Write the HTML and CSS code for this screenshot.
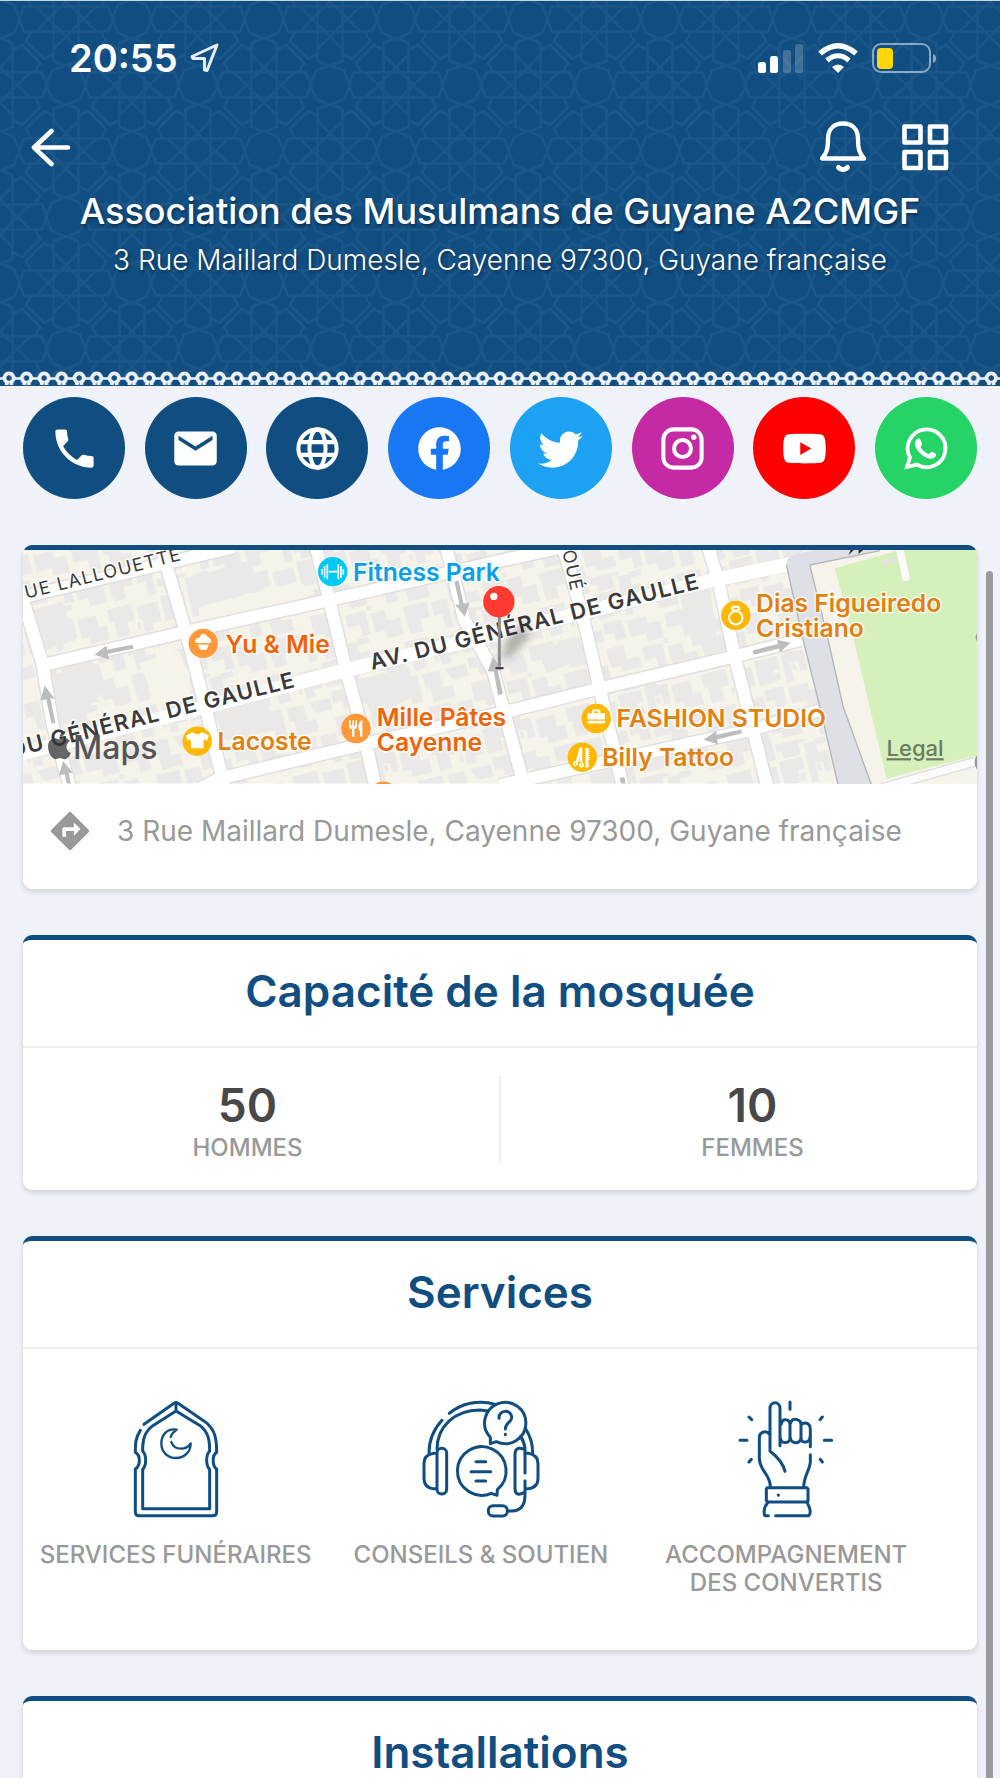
FILE: index.html
```html
<!DOCTYPE html>
<html lang="fr">
<head>
<meta charset="utf-8">
<meta name="viewport" content="width=device-width, initial-scale=1">
<title>Association des Musulmans de Guyane A2CMGF</title>
<link rel="stylesheet" href="styles.css">
</head>
<body>
<div class="app">
  <header class="header">
    <svg class="header-pattern" width="100%" height="100%" aria-hidden="true">
      <defs>
        <g id="ray">
          <path d="M-42 -12.500H42L47 0L42 12.500"/>
          <path transform="rotate(45)" d="M-30 -12.500H30"/>
          <path d="M35 12.500L40 22L22 40L12.500 35"/>
        </g>
        <g id="rosette">
          <use href="#ray"/><use href="#ray" transform="rotate(90)"/><use href="#ray" transform="rotate(180)"/><use href="#ray" transform="rotate(270)"/>
        </g>
        <path id="oct" d="M20 0L14 14L0 20L-14 14L-20 0L-14 -14L0 -20L14 -14Z"/>
        <pattern id="girih" width="132" height="132" y="18" patternUnits="userSpaceOnUse">
          <g fill="none" stroke="#1b5689" stroke-width="2.600">
            <use href="#oct"/><use href="#oct" x="132"/><use href="#oct" y="132"/><use href="#oct" x="132" y="132"/><use href="#oct" x="66" y="66"/>
            <use href="#rosette" x="66"/><use href="#rosette" x="66" y="132"/><use href="#rosette" y="66"/><use href="#rosette" x="132" y="66"/>
          </g>
        </pattern>
      </defs>
      <rect width="100%" height="100%" fill="url(#girih)"/>
    </svg>
    <div class="status">
      <div class="clock">20:55
        <svg width="30" height="30" viewBox="0 0 30 30" aria-hidden="true"><path d="M27 2L2 13.500L3 15.500H14.500V27L17 27.500Z" fill="none" stroke="#e6edf3" stroke-width="3" stroke-linejoin="round"/></svg>
      </div>
      <svg width="180" height="32" viewBox="0 0 180 32" aria-hidden="true">
        <g fill="#fff"><rect x="1" y="20" width="8" height="11" rx="2.500"/><rect x="13" y="14" width="8" height="17" rx="2.500"/>
        <g opacity=".2"><rect x="26" y="8" width="8" height="23" rx="2.500"/><rect x="38" y="2" width="8" height="29" rx="2.500"/></g></g>
        <g fill="none" stroke="#fff"><path d="M63 11.500Q81 -4 99 11.500" stroke-width="5.500"/><path d="M70 18.500Q81 9 92 18.500" stroke-width="5"/></g>
        <path d="M75 25Q81 20 87 25L81 31Z" fill="#fff"/>
        <rect x="116" y="2" width="57" height="28" rx="8" fill="none" stroke="#fff" stroke-opacity=".5" stroke-width="2"/>
        <path d="M176 12Q179 13 179 16.500T176 21Z" fill="#fff" opacity=".5"/>
        <rect x="120" y="6" width="16" height="21" rx="4" fill="#ffd60a"/>
      </svg>
    </div>
    <nav class="nav">
      <button class="icon-button" aria-label="Retour"><svg width="40" height="40" viewBox="0 0 40 40"><path d="M20.500 4L3 20.500L20.500 37M3 20.500H37" fill="none" stroke="#fff" stroke-width="4.500" stroke-linecap="round" stroke-linejoin="round"/></svg></button>
      <span class="nav-actions">
        <button class="icon-button" aria-label="Notifications"><svg width="48" height="52" viewBox="0 0 48 52"><path d="M3 37.500C8 32 9 27 9 18C9 8 15 2.500 24 2.500S39 8 39 18C39 27 40 32 45 37.500Z" fill="none" stroke="#fff" stroke-width="4.300" stroke-linejoin="round"/><path d="M19.500 46.500Q24 51 28.500 46.500" fill="none" stroke="#fff" stroke-width="5" stroke-linecap="round"/></svg></button>
        <button class="icon-button" aria-label="Menu"><svg width="48" height="48" viewBox="0 0 48 48"><g fill="none" stroke="#fff" stroke-width="4.600" stroke-linejoin="round"><path d="M3.500 3.500h16v16h-16zM29 3.500h16v16H29zM3.500 29h16v16h-16zM29 29h16v16H29z"/></g></svg></button>
      </span>
    </nav>
    <h1 class="title">Association des Musulmans de Guyane A2CMGF</h1>
    <p class="subtitle">3 Rue Maillard Dumesle, Cayenne 97300, Guyane française</p>
    <svg class="lace" width="100%" height="16" aria-hidden="true">
      <defs><pattern id="beads" width="17.540" height="16" patternUnits="userSpaceOnUse"><path d="M0 8.500H4M14 8.500H18" stroke="#eff3f9" stroke-width="2.600"/><path d="M6.500 15L7 12.200A4.600 4.600 0 1 1 11 12.200L11.500 15" fill="none" stroke="#eff3f9" stroke-width="3.800"/></pattern></defs>
      <rect width="100%" height="16" fill="url(#beads)"/>
    </svg>
  </header>

  <main class="content">
    <nav class="contacts" aria-label="Contact">
      <a class="contact" href="#tel" aria-label="Téléphone"><svg viewBox="0 0 24 24"><path d="M6.620 10.790c1.440 2.830 3.760 5.140 6.590 6.590l2.200-2.200c.27-.27.67-.36 1.020-.24 1.120.37 2.330.57 3.570.57.55 0 1 .45 1 1V20c0 .55-.45 1-1 1-9.390 0-17-7.610-17-17 0-.55.45-1 1-1h3.500c.55 0 1 .45 1 1 0 1.250.2 2.450.57 3.570.11.35.03.74-.25 1.020z"/></svg></a>
      <a class="contact" href="#mail" aria-label="E-mail"><svg viewBox="0 0 24 24"><path d="M20 4H4c-1.100 0-2 .9-2 2v12c0 1.100.9 2 2 2h16c1.100 0 2-.9 2-2V6c0-1.100-.9-2-2-2zm0 4l-8 5-8-5V6l8 5 8-5z"/></svg></a>
      <a class="contact" href="#web" aria-label="Site web"><svg viewBox="0 0 24 24"><g fill="none" stroke="#fff" stroke-width="1.900"><circle cx="12" cy="12" r="9"/><ellipse cx="12" cy="12" rx="3.800" ry="9"/><path d="M3.500 9h17M3.500 15h17"/></g></svg></a>
      <a class="contact facebook" href="#facebook" aria-label="Facebook"><svg viewBox="0 0 24 24"><path d="M12 2.040C6.500 2.040 2 6.530 2 12.060C2 17.060 5.660 21.210 10.440 21.960V14.960H7.900V12.060H10.440V9.850C10.440 7.340 11.930 5.960 14.220 5.960C15.310 5.960 16.450 6.150 16.450 6.150V8.620H15.190C13.950 8.620 13.560 9.390 13.560 10.180V12.060H16.340L15.890 14.960H13.560V21.960A10 10 0 0 0 22 12.060C22 6.530 17.500 2.040 12 2.040Z"/></svg></a>
      <a class="contact twitter" href="#twitter" aria-label="Twitter"><svg viewBox="0 0 24 24"><path d="M22.460 6C21.690 6.350 20.860 6.580 20 6.690C20.880 6.160 21.560 5.320 21.880 4.310C21.050 4.810 20.130 5.160 19.160 5.360C18.370 4.500 17.260 4 16 4C13.650 4 11.730 5.920 11.730 8.290C11.730 8.630 11.770 8.960 11.840 9.270C8.280 9.090 5.110 7.380 3 4.790C2.630 5.420 2.420 6.160 2.420 6.940C2.420 8.430 3.170 9.750 4.330 10.500C3.620 10.500 2.960 10.300 2.380 10V10.030C2.380 12.110 3.860 13.850 5.820 14.240C5.460 14.340 5.080 14.390 4.690 14.390C4.420 14.390 4.150 14.360 3.890 14.310C4.430 16 6 17.260 7.890 17.290C6.430 18.450 4.580 19.130 2.560 19.130C2.220 19.130 1.880 19.110 1.540 19.070C3.440 20.290 5.700 21 8.120 21C16 21 20.330 14.460 20.330 8.790C20.330 8.600 20.330 8.420 20.320 8.230C21.160 7.630 21.880 6.870 22.460 6Z"/></svg></a>
      <a class="contact instagram" href="#instagram" aria-label="Instagram"><svg viewBox="0 0 24 24"><g fill="none" stroke="#fff" stroke-width="1.900"><rect x="3" y="3" width="18" height="18" rx="4.800"/><circle cx="12" cy="12" r="4"/></g><circle cx="17.300" cy="6.700" r="1.300"/></svg></a>
      <a class="contact youtube" href="#youtube" aria-label="YouTube"><svg viewBox="0 0 24 24"><path d="M12 5C16 5 19 5.100 20 5.400C21.200 5.800 22 7 22 12S21.200 18.200 20 18.600C19 18.900 16 19 12 19S5 18.900 4 18.600C2.800 18.200 2 17 2 12S2.800 5.800 4 5.400C5 5.100 8 5 12 5ZM10 9V15L15.200 12Z"/></svg></a>
      <a class="contact whatsapp" href="#whatsapp" aria-label="WhatsApp"><svg viewBox="0 0 24 24"><path d="M3.300 20.700L4.700 16.200A8.900 8.900 0 1 1 8 19.600Z" fill="none" stroke="#fff" stroke-width="1.800"/><path d="M8.300 7.400C7.500 7.800 7 8.600 7 9.600C7.100 12.800 11.300 16.600 14.500 16.800C15.800 16.800 17 15.900 17 14.600C16.600 14.200 15.500 13.600 14.900 13.500C14.500 13.500 13.900 14.700 13.400 14.600C11.800 13.900 10.500 12.800 9.700 11.300C9.600 10.900 10.500 10.200 10.400 9.800L9.500 7.600C9.300 7.300 8.700 7.300 8.300 7.400Z"/></svg></a>
    </nav>

    <section class="card map-card">
      <svg class="map" viewBox="72 60 2859 700" role="img" aria-label="Plan du quartier">
        <defs>
          <pattern id="houses" width="420" height="310" patternUnits="userSpaceOnUse" patternTransform="rotate(-14)">
            <rect width="420" height="310" fill="#f6f3ea"/>
            <path fill="#eae9e8" d="M0 0H70V38H48V76H0ZM82 0H150V60H128V30H104V84H82ZM162 8H220V46H244V88H184V66H162ZM256 0H330V50H306V90H268V40H256ZM344 12H408V72H380V94H352V54H344ZM8 92H66V150H34V126H8ZM80 100H140V122H176V174H126V150H80ZM194 104H270V186H236V150H194ZM286 108H338V160H366V196H300V150H286ZM356 108H420V144H372ZM0 168H52V210H90V244H30V226H0ZM104 190H166V262H140V228H104ZM180 202H224V236H262V288H210V262H180ZM278 208H350V256H320V292H282ZM364 214H412V300H388V256H364ZM0 258H68V304H18V282H0ZM84 274H120V310H84Z"/>
            <path fill="#eae9e8" d="M52 50h16v22H52zM108 34h10v20h-10zM224 50h20v14h-20zM148 130h14v12h-14zM60 260h30v10H60zM172 180h14v14h-14zM334 60h10v18h-10zM120 268h36v18h-36z"/>
          </pattern>
          <filter id="soft" x="-50%" y="-50%" width="200%" height="200%"><feGaussianBlur stdDeviation="14"/></filter>
        </defs>
        <rect x="72" y="60" width="2859" height="700" fill="url(#houses)"/>
        <path fill="#eae9e8" d="M570 145L755 90L775 180L595 235ZM1620 360L1740 320L1760 380L1640 430ZM100 240L190 215L230 330L140 360ZM150 435L300 400L320 480L240 560L190 590ZM1070 450L1230 410L1240 500L1120 560ZM640 540L800 500L830 600L680 630ZM2040 200L2130 175L2150 320L2080 350Z"/>
        <path fill="#f6f3ea" d="M420 400L540 360L580 480L500 510L450 470ZM600 230L900 155L950 190L600 285ZM2430 105L2710 60H2931V760H2615L2530 530Z"/>
        <g fill="none" stroke="#dedede" stroke-width="44">
          <path d="M60 204L700 52M130 405L560 305L990 210L1500 93L1720 45M50 674L600 535L1040 420L1500 310L2140 150L2380 100M600 775L660 745L1100 640L1540 540L1800 475L2200 380L2420 325M1500 765L2250 600L2460 540"/>
          <path d="M60 170L130 400L160 580L215 780M485 50L560 305L620 535L675 770M950 50L990 210L1040 420L1100 640L1130 780M1340 50L1395 270L1480 420L1575 770M1690 50L1750 260L1800 475L1872 780M2125 50L2155 150L2205 380L2305 780"/>
        </g>
        <g fill="none" stroke="#fff" stroke-width="36">
          <path d="M60 204L700 52M130 405L560 305L990 210L1500 93L1720 45M600 775L660 745L1100 640L1540 540L1800 475L2200 380L2420 325M1500 765L2250 600L2460 540"/>
          <path stroke-width="42" d="M50 674L600 535L1040 420L1500 310L2140 150L2380 100"/>
          <path d="M60 170L130 400L160 580L215 780M485 50L560 305L620 535L675 770M950 50L990 210L1040 420L1100 640L1130 780M1340 50L1395 270L1480 420L1575 770M1690 50L1750 260L1800 475L1872 780M2125 50L2155 150L2205 380L2305 780"/>
        </g>
        <path d="M2360 100Q2360 80 2390 73L2440 60H2640L2430 105L2485 330L2530 530L2615 765H2515L2460 530L2410 330Z" fill="#dfe0e6"/>
        <path d="M2640 62L2430 105L2485 330L2530 530L2615 765M2360 105L2410 330L2460 530L2515 765" fill="none" stroke="#b4b5ba" stroke-width="4"/>
        <path d="M2505 115L2700 60H2931V675L2660 745L2562 330Z" fill="#d6f0bc"/>
        <path d="M2640 775L2940 690" stroke="#dedede" stroke-width="30"/><path d="M2640 775L2940 690M2700 60L2718 142" stroke="#fbfbfb" stroke-width="22" stroke-linecap="round"/>
        <path d="M2645 92L2690 82L2694 92L2668 100L2650 110Z" fill="#e4e5e0"/>
        <path d="M2931 310Q2922 320 2931 334M2931 675Q2916 695 2931 718" fill="#999"/>
        <path fill="#bdbdbd" d="M286 374L322 346L324 359L400 344L403 356L327 371L330 388ZM137 467L167 505L154 504L169 578L157 580L142 508L124 510ZM192 692L222 728L209 728L216 760H203L197 732L180 735ZM1396 260L1367 223L1380 223L1365 155L1377 151L1392 220L1410 219ZM2372 338L2340 367L2338 355L2262 374L2259 361L2334 342L2332 329ZM2112 629L2150 602L2150 614L2224 598L2227 609L2152 628L2155 642ZM1480 380L1508 420L1495 421L1510 490L1496 496L1483 424L1465 424ZM1860 743L1874 740L1878 760H1864Z"/>
        <g class="street">
          <text x="82" y="206" transform="rotate(-14 82 206)" class="minor">UE LALLOUETTE</text>
          <text x="1688" y="64" transform="rotate(78 1688 64)" class="minor">OUÉ</text>
          <text x="40" y="682" transform="rotate(-14 40 682)">DU GÉNÉRAL DE GAULLE</text>
          <text x="1118" y="420" transform="rotate(-14 1118 420)">AV. DU GÉNÉRAL DE GAULLE</text>
          <path d="M2546 75L2552 60H2562ZM2576 72V60H2590ZM2604 60L2620 72" fill="#333"/>
        </g>
        <ellipse cx="1550" cy="330" rx="62" ry="22" transform="rotate(-55 1550 330)" opacity=".3" filter="url(#soft)"/>
        <rect x="1495" y="255" width="9" height="155" fill="#8d8d8d"/><path d="M1488 414H1512" stroke="#333" stroke-width="6"/>
        <circle cx="1498" cy="215" r="47" fill="#ff3b30"/><circle cx="1483" cy="199" r="11" fill="#fff"/>
        <g class="pins">
          <circle cx="1000" cy="125" r="44" fill="#00c8f5"/><circle cx="612" cy="340" r="44" fill="#ff9838"/><circle cx="1070" cy="595" r="44" fill="#ff9838"/><circle cx="1152" cy="798" r="44" fill="#ff9838"/>
          <g fill="#ffb800"><circle cx="594" cy="633" r="44"/><circle cx="2208" cy="256" r="44"/><circle cx="1790" cy="565" r="44"/><circle cx="1748" cy="681" r="44"/></g>
          <path d="M968 117V134M976 108V143M984 102V148M988 125H1013M1017 102V148M1025 108V143M1032 117V134" stroke="#fff" stroke-width="5"/>
          <path d="M587 336Q588 323 602 322Q606 308 616 312Q626 320 635 328Q640 338 630 339H592ZM596 343H629L622 359H603Z" fill="#fff"/>
          <path d="M560 616L580 606Q594 618 608 606L629 616L624 631L613 628V654H575V628L565 631Z" fill="#fff"/>
          <path d="M1049 570V591Q1050 596 1058 597V620H1065V597Q1073 596 1073 590V570H1068V587H1064V570H1059V587H1054V570ZM1086 570Q1074 580 1078 601H1082V620H1089V570Z" fill="#fff"/>
          <g fill="none" stroke="#fff" stroke-width="6"><circle cx="2208" cy="263" r="20"/><path d="M2200 230H2216L2219 236L2208 244L2197 236Z"/></g>
          <path d="M1764 549H1816V568H1764ZM1764 572H1816V580H1764ZM1778 549V538H1802V549H1796V543H1784V549Z" fill="#fff"/>
          <g fill="none" stroke="#fff" stroke-width="5"><path d="M1744 652L1732 695M1744 652V695" stroke-width="8"/><circle cx="1728" cy="700" r="5"/><circle cx="1746" cy="704" r="5"/><path stroke-width="9" d="M1762 653V712"/><path d="M1768 656V692" stroke-width="4" stroke-dasharray="3 3"/></g>
        </g>
        <g class="place">
          <text x="1061" y="153" fill="#0aa0e8">Fitness Park</text>
          <g fill="#ed6409"><text x="679" y="368">Yu &amp; Mie</text><text x="1132" y="587">Mille Pâtes</text><text x="1132" y="662">Cayenne</text></g>
          <g fill="#e08112"><text x="655" y="658">Lacoste</text><text x="2269" y="247">Dias Figueiredo</text><text x="2269" y="322">Cristiano</text><text x="1851" y="590">FASHION STUDIO</text><text x="1808" y="707">Billy Tattoo</text></g>
        </g>
        <path d="M147 650C147 630 160 622 172 625L183 628L196 624Q207 624 213 632Q200 642 203 657Q206 665 216 668C211 680 202 688 195 687L183 683L170 687C158 686 148 670 147 650ZM182 621Q181 607 199 602Q200 617 182 621Z" fill="#333" opacity=".75"/>
        <text class="brand" x="222" y="687">Maps</text>
        <text class="legal" x="2660" y="678">Legal</text>
      </svg>
      <a class="address" href="#itineraire">
        <svg width="46" height="46" viewBox="0 0 24 24" aria-hidden="true"><path d="M21.710 11.290l-9-9a1 1 0 0 0-1.420 0l-9 9a1 1 0 0 0 0 1.420l9 9c.39.39 1.020.39 1.420 0l9-9a1 1 0 0 0 0-1.420zM14 14.500V12h-4v3H8v-4c0-.55.45-1 1-1h5V7.500l3.500 3.500-3.500 3.500z" fill="#999"/></svg>
        <span>3 Rue Maillard Dumesle, Cayenne 97300, Guyane française</span>
      </a>
    </section>

    <section class="card">
      <h2 class="card-title">Capacité de la mosquée</h2>
      <dl class="capacity">
        <div class="count"><dd>50</dd><dt>HOMMES</dt></div>
        <div class="rule"></div>
        <div class="count"><dd>10</dd><dt>FEMMES</dt></div>
      </dl>
    </section>

    <section class="card">
      <h2 class="card-title">Services</h2>
      <ul class="services">
        <li class="service">
          <svg viewBox="288 62 360 360" aria-hidden="true"><path d="M372 138L462 75Q468 70 474 75L555 130C585 153 590 180 590 222C576 230 576 262 590 272V400Q590 412 578 412H358Q346 412 346 400V272C362 262 362 230 346 222C346 195 347 177 361 156"/><path d="M468 74V98L396 144C372 163 368 185 368 218C380 230 380 262 368 273V391H569V273C557 262 557 230 569 218C569 185 565 163 543 144L468 98"/><path stroke-width="7" d="M452 176Q456 164 470 154C440 148 424 172 424 195C424 222 444 239 468 239C494 239 513 219 512 195Q502 211 483 211C468 211 458 203 454 191"/></svg>
          SERVICES FUNÉRAIRES
        </li>
        <li class="service">
          <svg viewBox="244 62 360 360" aria-hidden="true"><path d="M329 105C365 76 415 63 467 78M307 126Q268 168 268 224M292 213C292 145 345 95 420 95L446 98M557 150Q579 183 579 224M543 174Q555 193 556 212V284"/><path d="M452 177V196L470 190A62 62 0 1 0 452 177ZM478 120C477 92 517 93 516 118C515 133 497 132 497 152M497 168V169"/><path d="M472 351L455 345A73 73 0 1 1 473 334ZM409 250H438M394 280H453M409 308H438"/><rect x="292" y="210" width="29" height="137" rx="14"/><path d="M289 225H282Q253 230 253 255V300Q253 328 280 331H290M556 225H566Q595 230 595 256V300Q595 328 566 331H558M553 343Q526 357 526 330V228Q526 204 551 212M556 307V350Q556 397 517 398H504"/><rect x="446" y="382" width="57" height="31" rx="14"/></svg>
          CONSEILS &amp; SOUTIEN
        </li>
        <li class="service">
          <svg viewBox="260 62 360 360" aria-hidden="true"><path d="M422 202V90C422 68 392 68 392 90V218Q430 248 437 279M391 168Q382 158 373 161Q360 164 360 178V240C360 278 392 286 393 324M513 205V154C513 127 485 132 485 142V180C485 197 512 194 512 175M426 137C428 119 450 121 452 137V178C452 198 424 196 424 182M454 134C458 118 484 120 485 138V178C484 199 454 197 453 178M513 229V252C511 276 495 289 493 324M384 328H503L506 332V369L502 371H386L381 367V332ZM387 412H376Q370 390 385 373M409 412H508Q519 402 504 374M417 350V351M452 71V93M329 116L337 124M549 116L542 124M302 186H323M555 186H577M336 243L329 251M543 243L549 251"/></svg>
          ACCOMPAGNEMENT DES CONVERTIS
        </li>
      </ul>
    </section>

    <section class="card">
      <h2 class="card-title">Installations</h2>
    </section>
  </main>
  <div class="scroll-thumb"></div>
</div>
</body>
</html>
```
FILE: styles.css
```css
* { box-sizing: border-box; }
body {
  margin: 0;
  background: #eff3f9;
  font-family: Inter, "Liberation Sans", sans-serif;
}
h1, h2, p, dl, dd, ul { margin: 0; padding: 0; }
svg { display: block; }

.app { position: relative; height: 100vh; overflow: hidden; }

.header {
  position: relative;
  display: flex;
  flex-direction: column;
  height: 386px;
  border-top: 1px solid #c9d6dd;
  background: #104d81;
  color: #fff;
}
.header-pattern { position: absolute; inset: 0; }
.status, .nav, .title, .subtitle, .lace { position: relative; }
.status {
  display: flex;
  justify-content: space-between;
  align-items: center;
  padding: 41px 63px 0 69px;
}
.clock {
  display: flex;
  align-items: center;
  gap: 12px;
  font-size: 38px;
  line-height: 32px;
  font-weight: 600;
}
.nav {
  display: flex;
  justify-content: space-between;
  align-items: center;
  padding: 47px 51px 0 31px;
}
.nav-actions { display: flex; align-items: center; gap: 34px; }
.icon-button { padding: 0; border: 0; background: none; cursor: pointer; }
.title {
  padding-top: 16px;
  font-size: 36px;
  line-height: 44px;
  font-weight: 500;
  text-align: center;
  text-shadow: 1px 2px 3px #0006;
}
.subtitle {
  padding-top: 10px;
  font-size: 28px;
  line-height: 34px;
  font-weight: 300;
  text-align: center;
  text-shadow: 1px 2px 3px #0006;
}
.lace { margin-top: auto; }

.content {
  display: flex;
  flex-direction: column;
  gap: 46px;
  padding: 11px 23px 0;
}
.contacts { display: flex; justify-content: space-between; }
.contact {
  display: grid;
  place-items: center;
  width: 102px;
  height: 102px;
  border-radius: 50%;
  background: #104d81;
}
.contact svg { width: 51px; height: 51px; fill: #fff; }
.facebook { background: #1877f2; }
.twitter { background: #1da1f2; }
.instagram { background: #c32aa3; }
.youtube { background: #f00; }
.whatsapp { background: #25d366; }

.card {
  border-top: 5px solid #104d81;
  border-radius: 9px;
  background: #fff;
  box-shadow: 0 3px 5px #0002;
}
.map { width: 100%; overflow: hidden; }
.street text { font-size: 66px; font-weight: 600; letter-spacing: 4px; }
.street .minor { font-size: 54px; font-weight: 400; }
.street text, .place text { paint-order: stroke; stroke: #fffc; stroke-width: 9px; stroke-linejoin: round; }
.street { fill: #3a3a3a; }
.place { font-size: 74px; font-weight: 600; }
.brand { font-size: 96px; font-weight: 500; fill: #555; }
.legal { font-size: 66px; font-weight: 500; fill: #6b7d5c; text-decoration: underline; }
.address {
  display: flex;
  align-items: center;
  gap: 24px;
  height: 105px;
  padding: 0 24px 11px;
  color: #999;
  font-size: 28px;
  line-height: 34px;
  text-decoration: none;
}
.card-title {
  padding: 25px 0 29px;
  border-bottom: 2px solid #eee;
  color: #104d81;
  font-size: 44px;
  line-height: 52px;
  font-weight: 600;
  text-align: center;
}
.capacity {
  display: grid;
  grid-template-columns: 1fr 2px 1fr;
  column-gap: 27px;
  padding: 28px 0;
}
.count { display: flex; flex-direction: column; align-items: center; }
.count dd { color: #484848; font-size: 46px; line-height: 58px; font-weight: 600; }
.count dt, .service {
  color: #999;
  font-size: 24px;
  line-height: 28px;
  font-weight: 500;
}
.rule { background: #eee; }
.services {
  display: grid;
  grid-template-columns: 32% 32% 32%;
  padding: 50px 0 53px;
  list-style: none;
}
.service {
  display: flex;
  flex-direction: column;
  align-items: center;
  gap: 22px;
  padding: 0 24px;
  text-align: center;
}
.service:not(:last-child) { padding: 0; }
.service svg {
  width: 120px;
  height: 120px;
  fill: none;
  stroke: #104d81;
  stroke-width: 9;
  stroke-linecap: round;
  stroke-linejoin: round;
}
.scroll-thumb {
  position: absolute;
  top: 571px;
  right: 7px;
  bottom: -8px;
  width: 7px;
  border-radius: 4px;
  background: #9a9b9d;
}
```
